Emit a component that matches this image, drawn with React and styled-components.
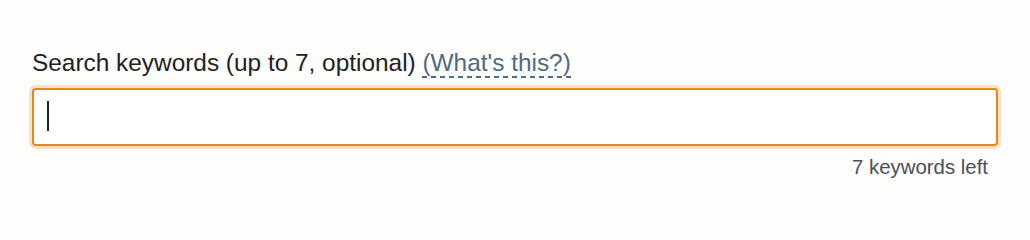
import React from 'react';
import styled, { createGlobalStyle } from 'styled-components';

const GlobalStyle = createGlobalStyle`
  html, body {
    margin: 0;
    padding: 0;
    background: #fdfdfc;
    font-family: "Liberation Sans", Arial, sans-serif;
  }
`;

const Page = styled.div`
  padding: 49px 32px 0 32px;
  width: 966px;
`;

const Label = styled.label`
  display: block;
  font-size: 24.4px;
  line-height: 28px;
  color: #222;
  margin-bottom: 11px;
`;

// dashed underline drawn as a gradient so the dash length matches
const Help = styled.a`
  color: #4f6b80;
  text-decoration: none;
  padding-bottom: 2px;
  background-image: repeating-linear-gradient(
    to right,
    #4f6b80 0 5px,
    transparent 5px 9px
  );
  background-size: 100% 2px;
  background-repeat: no-repeat;
  background-position: 0 100%;
  cursor: help;
`;

const Field = styled.div`
  position: relative;
`;

const Input = styled.input`
  display: block;
  box-sizing: border-box;
  width: 100%;
  height: 58px;
  padding: 0 14px;
  font-family: inherit;
  font-size: 20px;
  color: #222;
  background: #fff;
  border: 2px solid #e8861e;
  border-radius: 4px;
  box-shadow: 0 0 0 3px rgba(240, 150, 60, 0.28);
  outline: none;
`;

const Caret = styled.span`
  position: absolute;
  left: 15px;
  top: 13px;
  width: 2px;
  height: 30px;
  background: #222;
`;

const Counter = styled.div`
  text-align: right;
  padding-right: 10px;
  margin-top: 9px;
  font-size: 20.4px;
  line-height: 24px;
  color: #4a5058;
`;

export default function App() {
  return (
    <>
      <GlobalStyle />
      <Page>
        <Label htmlFor="kw">
          Search keywords (up to 7, optional) <Help href="#">(What's this?)</Help>
        </Label>
        <Field>
          <Input id="kw" type="text" />
          <Caret />
        </Field>
        <Counter>7 keywords left</Counter>
      </Page>
    </>
  );
}
